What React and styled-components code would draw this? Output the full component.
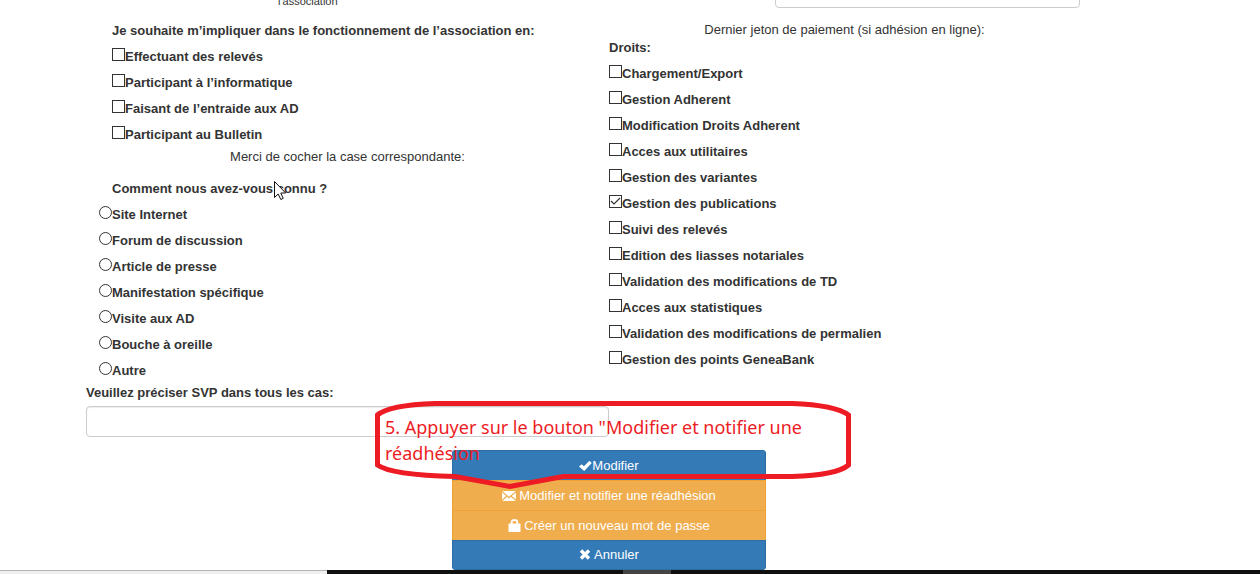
import React from "react";
import styled, { createGlobalStyle } from "styled-components";

const GlobalStyle = createGlobalStyle`
  *, *::before, *::after { box-sizing: border-box; }
  body {
    margin: 0;
    background: #fff;
    color: #333;
    font-family: "Liberation Sans", Arial, sans-serif;
    font-size: 13px;
    line-height: 18px;
  }
`;

const Page = styled.main`
  overflow: hidden;
`;

const Form = styled.form`
  padding: 0 128px 0 86px;
`;

const Columns = styled.div`
  display: grid;
  grid-template-columns: 1fr 1fr;
`;

const Column = styled.section`
  padding-right: ${(p) => p.$inset || 0}px;
`;

const ClippedRow = styled.div`
  display: flex;
  align-items: flex-end;
  justify-content: ${(p) => (p.$end ? "flex-end" : "flex-start")};
  height: 8px;
  margin-bottom: ${(p) => p.$gap}px;
  overflow: hidden;
`;

const SmallLabel = styled.span`
  margin-left: 192px;
  font-size: 11px;
  line-height: 14px;
`;

const TextInput = styled.input`
  display: block;
  flex: none;
  width: ${(p) => p.$width || "100%"};
  height: 31px;
  padding: 6px 12px;
  border: 1px solid #ccc;
  border-radius: 4px;
  background: #fff;
  box-shadow: inset 0 1px 1px rgba(0, 0, 0, 0.075);
  font: inherit;
`;

const Choices = styled.fieldset`
  min-width: 0;
  margin: 0;
  padding: 0 0 0 ${(p) => p.$indent || 0}px;
  border: 0;
`;

const Heading = styled.legend`
  position: relative;
  padding: 0 0 0 ${(p) => p.$indent || 0}px;
  font-weight: bold;
  line-height: ${(p) => (p.$compact ? 18 : 26)}px;
  margin-bottom: ${(p) => (p.$compact ? 4 : 0)}px;
`;

const Choice = styled.label`
  display: flex;
  align-items: center;
  height: 26px;
  font-weight: bold;
`;

const Box = styled.input`
  appearance: none;
  flex: none;
  width: 13px;
  height: 13px;
  margin: 0 0 5px;
  border: 1px solid #333;
  border-radius: ${(p) => (p.type === "radio" ? "50%" : "0")};
  background: #fff;
  &:checked {
    background: #fff
      url("data:image/svg+xml,%3Csvg xmlns='http://www.w3.org/2000/svg' viewBox='0 0 11 11'%3E%3Cpath d='M1 5 4 8 10 2' fill='none' stroke='%23333' stroke-width='1.2'/%3E%3C/svg%3E")
      center / 11px 11px no-repeat;
  }
`;

const Note = styled.p`
  margin: 0 0 ${(p) => p.$gap || 0}px;
  text-align: center;
`;

const FieldLabel = styled.label`
  display: block;
  margin-bottom: 4px;
  font-weight: bold;
`;

const Actions = styled.div`
  position: relative;
  margin-top: 13px;
`;

const ButtonStack = styled.div`
  display: flex;
  flex-direction: column;
  width: 30%;
  margin: 0 auto;
  border-radius: 4px;
  overflow: hidden;
`;

const Button = styled.button`
  display: flex;
  align-items: center;
  justify-content: center;
  gap: ${(p) => (p.$tight ? 0 : 3)}px;
  height: 30px;
  padding: 0;
  border: 1px solid ${(p) => (p.$warning ? "#eea236" : "#2e6da4")};
  background: ${(p) => (p.$warning ? "#f0ad4e" : "#337ab7")};
  color: #fff;
  font: inherit;
  &:not(:last-child) { border-bottom: 0; }
`;

const Callout = styled.aside`
  position: absolute;
  top: -50px;
  left: calc(50% - 234px);
  width: 476px;
  height: 92px;
  padding: 14px 20px 0 10px;
  color: #ed1c24;
  font-family: "Noto Sans", "Open Sans", sans-serif;
  font-size: 18px;
  line-height: 26px;
  pointer-events: none;
  & > p { margin: 0; }
  & > svg { position: absolute; top: 0; left: 0; }
`;

const Pointer = styled.svg`
  position: absolute;
  top: 5px;
  left: 175px;
`;

const Taskbar = styled.div`
  display: grid;
  grid-template-columns: 327fr 296fr 48fr 589fr;
  height: 4px;
  background: #101010;
`;

const TaskbarPart = styled.span`
  background: ${(p) => p.$color};
  border-top: ${(p) => (p.$line ? "1px solid #b4b4b4" : "0")};
`;

const Check = () => (
  <svg width="13" height="12" viewBox="0 0 13 12" aria-hidden="true">
    <path d="M0 6.6 2.6 4.2 5 6.3 10.4 0.8 12.8 3 5.2 11Z" fill="#fff" />
  </svg>
);
const Envelope = () => (
  <svg width="14" height="12" viewBox="0 0 14 12" aria-hidden="true">
    <path d="M0.2 1h13.6L7 6.8ZM0 2.4 4.2 6 0 9.6ZM14 2.4 9.8 6l4.2 3.6ZM0.2 11 5.1 6.8 7 8.4 8.9 6.8 13.8 11Z" fill="#fff" />
  </svg>
);
const Lock = () => (
  <svg width="13" height="14" viewBox="0 0 13 14" aria-hidden="true">
    <path d="M3.7 6V3Q3.7 1 6.5 1T9.3 3V6" fill="none" stroke="#fff" strokeWidth="1.8" />
    <rect x="0.5" y="4.5" width="12" height="8.5" rx="0.6" fill="#fff" />
  </svg>
);
const Cross = () => (
  <svg width="12" height="12" viewBox="0 0 12 12" aria-hidden="true">
    <path d="M2 1.5 10 9.5M10 1.5 2 9.5" stroke="#fff" strokeWidth="3.4" />
  </svg>
);

const involvement = [
  "Effectuant des relevés",
  "Participant à l’informatique",
  "Faisant de l’entraide aux AD",
  "Participant au Bulletin",
];
const sources = [
  "Site Internet",
  "Forum de discussion",
  "Article de presse",
  "Manifestation spécifique",
  "Visite aux AD",
  "Bouche à oreille",
  "Autre",
];
const rights = [
  "Chargement/Export",
  "Gestion Adherent",
  "Modification Droits Adherent",
  "Acces aux utilitaires",
  "Gestion des variantes",
  "Gestion des publications",
  "Suivi des relevés",
  "Edition des liasses notariales",
  "Validation des modifications de TD",
  "Acces aux statistiques",
  "Validation des modifications de permalien",
  "Gestion des points GeneaBank",
];

export default function App() {
  return (
    <Page>
      <GlobalStyle />
      <Form onSubmit={(e) => e.preventDefault()}>
        <Columns>
          <Column>
            <ClippedRow $gap={10}>
              <SmallLabel>l'association</SmallLabel>
            </ClippedRow>
            <Choices $indent={26}>
              <Heading>Je souhaite m’impliquer dans le fonctionnement de l’association en:</Heading>
              {involvement.map((t) => (
                <Choice key={t}><Box type="checkbox" />{t}</Choice>
              ))}
            </Choices>
            <Note $gap={10}>Merci de cocher la case correspondante:</Note>
            <Choices $indent={13}>
              <Heading $indent={13}>
                Comment nous avez-vous connu ?
                <Pointer width="12" height="19" viewBox="0 0 12 19" aria-hidden="true">
                  <path d="M0.5 0.5V16.5L4.2 13 6.8 18.5 9.2 17.4 6.8 12H11.7Z" fill="#fff" stroke="#111" />
                </Pointer>
              </Heading>
              {sources.map((t) => (
                <Choice key={t}><Box type="radio" name="source" />{t}</Choice>
              ))}
            </Choices>
            <FieldLabel htmlFor="details">Veuillez préciser SVP dans tous les cas:</FieldLabel>
            <TextInput id="details" type="text" />
          </Column>
          <Column $inset={52}>
            <ClippedRow $end $gap={13}>
              <TextInput $width="305px" type="text" aria-label="Paiement" />
            </ClippedRow>
            <Note>Dernier jeton de paiement (si adhésion en ligne):</Note>
            <Choices>
              <Heading $compact>Droits:</Heading>
              {rights.map((t) => (
                <Choice key={t}>
                  <Box type="checkbox" defaultChecked={t === "Gestion des publications"} />{t}
                </Choice>
              ))}
            </Choices>
          </Column>
        </Columns>
        <Actions>
          <ButtonStack>
            <Button type="submit" $tight><Check />Modifier</Button>
            <Button type="button" $warning><Envelope />Modifier et notifier une réadhésion</Button>
            <Button type="button" $warning><Lock />Créer un nouveau mot de passe</Button>
            <Button type="reset"><Cross />Annuler</Button>
          </ButtonStack>
          <Callout>
            <svg width="476" height="92" viewBox="0 0 476 92" aria-hidden="true">
              <path
                d="M60 3.5H417Q460 5 473.5 15V65Q462 75 417 76.5H188L135 86.5 80 76.5Q16 75 2.5 65V15Q14 5 60 3.5Z"
                fill="none" stroke="#ed1c24" strokeWidth="5"
              />
            </svg>
            <p>5. Appuyer sur le bouton "Modifier et notifier une réadhésion</p>
          </Callout>
        </Actions>
      </Form>
      <Taskbar>
        <TaskbarPart $color="#f0f0f0" $line />
        <TaskbarPart $color="#101010" />
        <TaskbarPart $color="#444" />
        <TaskbarPart $color="#101010" />
      </Taskbar>
    </Page>
  );
}
